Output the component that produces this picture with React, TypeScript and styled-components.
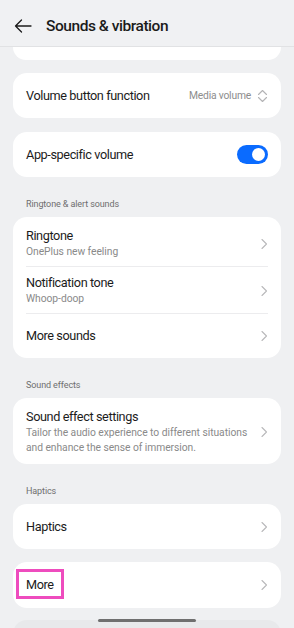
import React from "react";
import styled, { createGlobalStyle } from "styled-components";

const GlobalStyle = createGlobalStyle`
  html, body { margin: 0; padding: 0; background: #eff0f2; }
  body { font-family: Roboto, "Noto Sans", Arial, sans-serif; -webkit-font-smoothing: antialiased; }
  * { box-sizing: border-box; }
`;

const Screen = styled.div`
  width: 294px;
  height: 628px;
  overflow: hidden;
  background: #eff0f2;
  display: flex;
  flex-direction: column;
  position: relative;
`;

const Header = styled.header`
  height: 47px;
  flex: 0 0 47px;
  display: flex;
  align-items: center;
  gap: 14px;
  padding: 5px 0 0 14px;
  border-bottom: 1px solid #e1e2e4;
  background: #f0f1f3;
`;

const Title = styled.h1`
  margin: 0;
  font-size: 15.5px;
  font-weight: 500;
  color: #1b1b1b;
  letter-spacing: -0.45px;
`;

const Content = styled.main`
  display: flex;
  flex-direction: column;
  padding: 0 13px;
`;

const Card = styled.section<{ $mt?: number; $pad?: string }>`
  background: #fff;
  border-radius: 14px;
  margin-top: ${(p) => p.$mt ?? 0}px;
  padding: ${(p) => p.$pad ?? "0"};
  display: flex;
  flex-direction: column;
`;

const ClippedCard = styled.div`
  height: 13px;
  background: #fff;
  border-radius: 0 0 14px 14px;
`;

const FadedCard = styled.div`
  height: 30px;
  margin-top: 12px;
  background: #e8e9eb;
  border-radius: 14px 14px 0 0;
`;

const Row = styled.div<{ $h?: number; $pad?: string; $divider?: boolean }>`
  min-height: ${(p) => p.$h ?? 45}px;
  padding: ${(p) => p.$pad ?? "0 13px"};
  display: flex;
  align-items: center;
  gap: 6px;
  position: relative;
  ${(p) =>
    p.$divider
      ? `&::after { content: ""; position: absolute; left: 13px; right: 13px; bottom: 0; height: 1px; background: #ececee; }`
      : ""}
`;

const Texts = styled.div`
  flex: 1;
  display: flex;
  flex-direction: column;
  min-width: 0;
`;

const RowTitle = styled.span`
  font-size: 12.7px;
  line-height: 16px;
  letter-spacing: -0.4px;
  color: #1c1c1c;
`;

const RowSub = styled.span`
  font-size: 10.3px;
  line-height: 15px;
  letter-spacing: -0.05px;
  color: #8a8a8a;
`;

const Value = styled.span`
  font-size: 10.3px;
  letter-spacing: -0.2px;
  color: #8d8d8d;
`;

const SectionLabel = styled.div`
  padding: 21px 13px 7px;
  font-size: 9px;
  line-height: 12px;
  letter-spacing: -0.1px;
  color: #6e6e6e;
`;

const Toggle = styled.div<{ $on: boolean }>`
  width: 31px;
  height: 19px;
  border-radius: 10px;
  background: ${(p) => (p.$on ? "#0a6bff" : "#d0d0d0")};
  position: relative;
  flex: 0 0 auto;
  &::after {
    content: "";
    position: absolute;
    top: 3px;
    ${(p) => (p.$on ? "right: 3px;" : "left: 3px;")}
    width: 13px;
    height: 13px;
    border-radius: 50%;
    background: #fff;
  }
`;

const Highlighted = styled.span`
  position: relative;
  &::after {
    content: "";
    position: absolute;
    left: -10px;
    right: -10px;
    top: -8px;
    bottom: -7px;
    border: 3px solid #ee4cbe;
  }
`;

const HomeBar = styled.div`
  position: absolute;
  left: 98px;
  top: 619px;
  width: 98px;
  height: 3px;
  border-radius: 2px;
  background: #6f6f6f;
`;

const Chevron = () => (
  <svg width="8" height="12" viewBox="0 0 8 12" style={{ flex: "0 0 auto" }}>
    <polyline points="2,1.5 6.5,6 2,10.5" fill="none" stroke="#b9b9bb" strokeWidth="1.1" strokeLinecap="round" strokeLinejoin="round" />
  </svg>
);

const UpDown = () => (
  <svg width="11" height="14" viewBox="0 0 11 14" style={{ flex: "0 0 auto" }}>
    <polyline points="1.5,5.5 5.5,1.5 9.5,5.5" fill="none" stroke="#b4b4b6" strokeWidth="1.1" strokeLinecap="round" strokeLinejoin="round" />
    <polyline points="1.5,8.5 5.5,12.5 9.5,8.5" fill="none" stroke="#b4b4b6" strokeWidth="1.1" strokeLinecap="round" strokeLinejoin="round" />
  </svg>
);

const BackArrow = () => (
  <svg width="18" height="14" viewBox="0 0 18 14">
    <path d="M17 7H1.5M7.5 1L1.5 7l6 6" fill="none" stroke="#1b1b1b" strokeWidth="1.3" strokeLinecap="round" strokeLinejoin="round" />
  </svg>
);

export default function App() {
  return (
    <>
      <GlobalStyle />
      <Screen>
        <Header>
          <BackArrow />
          <Title>Sounds &amp; vibration</Title>
        </Header>
        <Content>
          <ClippedCard />
          <Card $mt={13}>
            <Row>
              <Texts>
                <RowTitle>Volume button function</RowTitle>
              </Texts>
              <Value>Media volume</Value>
              <UpDown />
            </Row>
          </Card>
          <Card $mt={14}>
            <Row>
              <Texts>
                <RowTitle>App-specific volume</RowTitle>
              </Texts>
              <Toggle $on />
            </Row>
          </Card>
          <SectionLabel>Ringtone &amp; alert sounds</SectionLabel>
          <Card $pad="3px 0 0">
            <Row $h={47} $pad="8px 13px" $divider>
              <Texts>
                <RowTitle>Ringtone</RowTitle>
                <RowSub>OnePlus new feeling</RowSub>
              </Texts>
              <Chevron />
            </Row>
            <Row $h={47} $pad="8px 13px" $divider>
              <Texts>
                <RowTitle>Notification tone</RowTitle>
                <RowSub>Whoop-doop</RowSub>
              </Texts>
              <Chevron />
            </Row>
            <Row $h={44}>
              <Texts>
                <RowTitle>More sounds</RowTitle>
              </Texts>
              <Chevron />
            </Row>
          </Card>
          <SectionLabel>Sound effects</SectionLabel>
          <Card>
            <Row $h={66} $pad="11px 13px 9px">
              <Texts>
                <RowTitle>Sound effect settings</RowTitle>
                <RowSub>Tailor the audio experience to different situations and enhance the sense of immersion.</RowSub>
              </Texts>
              <Chevron />
            </Row>
          </Card>
          <SectionLabel>Haptics</SectionLabel>
          <Card>
            <Row>
              <Texts>
                <RowTitle>Haptics</RowTitle>
              </Texts>
              <Chevron />
            </Row>
          </Card>
          <Card $mt={13}>
            <Row $h={46}>
              <Texts>
                <RowTitle>
                  <Highlighted>More</Highlighted>
                </RowTitle>
              </Texts>
              <Chevron />
            </Row>
          </Card>
          <FadedCard />
        </Content>
        <HomeBar />
      </Screen>
    </>
  );
}
